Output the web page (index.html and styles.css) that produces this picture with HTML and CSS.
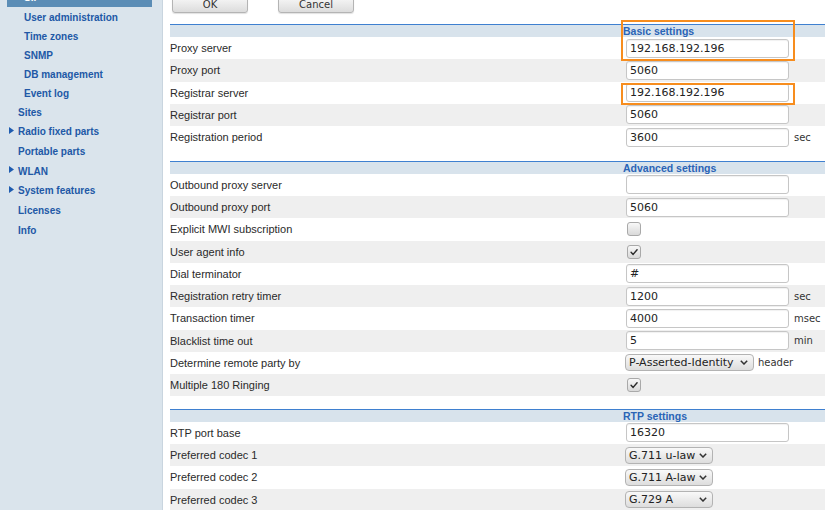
FILE: index.html
```html
<!DOCTYPE html>
<html>
<head>
<meta charset="utf-8">
<title>SIP settings</title>
<link rel="stylesheet" href="styles.css">
</head>
<body>
<div class="page">
  <aside class="sidebar">
    <nav class="nav">
      <a class="item sub active">SIP</a>
      <a class="item sub">User administration</a>
      <a class="item sub">Time zones</a>
      <a class="item sub">SNMP</a>
      <a class="item sub">DB management</a>
      <a class="item sub">Event log</a>
      <a class="item top first-top">Sites</a>
      <a class="item top"><svg class="arrow" viewBox="0 0 5 7"><path d="M0 0 L5 3.5 L0 7 Z"/></svg>Radio fixed parts</a>
      <a class="item top">Portable parts</a>
      <a class="item top"><svg class="arrow" viewBox="0 0 5 7"><path d="M0 0 L5 3.5 L0 7 Z"/></svg>WLAN</a>
      <a class="item top"><svg class="arrow" viewBox="0 0 5 7"><path d="M0 0 L5 3.5 L0 7 Z"/></svg>System features</a>
      <a class="item top">Licenses</a>
      <a class="item top">Info</a>
    </nav>
  </aside>

  <main class="content">
    <div class="buttons">
      <button class="btn">OK</button>
      <button class="btn">Cancel</button>
    </div>

    <section class="section">
      <div class="section-head"><span class="head-title">Basic settings</span></div>
      <div class="row"><span class="label">Proxy server</span><span class="field"><input class="text" value="192.168.192.196"></span></div>
      <div class="row alt"><span class="label">Proxy port</span><span class="field"><input class="text" value="5060"></span></div>
      <div class="row"><span class="label">Registrar server</span><span class="field"><input class="text" value="192.168.192.196"></span></div>
      <div class="row alt"><span class="label">Registrar port</span><span class="field"><input class="text" value="5060"></span></div>
      <div class="row"><span class="label">Registration period</span><span class="field"><input class="text" value="3600"><span class="unit">sec</span></span></div>
      <div class="highlight hl-basic"></div>
      <div class="highlight hl-registrar"></div>
    </section>

    <section class="section">
      <div class="section-head"><span class="head-title">Advanced settings</span></div>
      <div class="row"><span class="label">Outbound proxy server</span><span class="field"><input class="text" value=""></span></div>
      <div class="row alt"><span class="label">Outbound proxy port</span><span class="field"><input class="text" value="5060"></span></div>
      <div class="row"><span class="label">Explicit MWI subscription</span><span class="field"><span class="checkbox"></span></span></div>
      <div class="row alt"><span class="label">User agent info</span><span class="field"><span class="checkbox"><svg class="check" viewBox="0 0 14 14"><path d="M3.6 7.4 L6 9.8 L10.6 4.4"/></svg></span></span></div>
      <div class="row"><span class="label">Dial terminator</span><span class="field"><input class="text" value="#"></span></div>
      <div class="row alt"><span class="label">Registration retry timer</span><span class="field"><input class="text" value="1200"><span class="unit">sec</span></span></div>
      <div class="row"><span class="label">Transaction timer</span><span class="field"><input class="text" value="4000"><span class="unit">msec</span></span></div>
      <div class="row alt"><span class="label">Blacklist time out</span><span class="field"><input class="text" value="5"><span class="unit">min</span></span></div>
      <div class="row"><span class="label">Determine remote party by</span><span class="field"><span class="select"><select class="sel"><option>P-Asserted-Identity</option></select><svg class="chev" viewBox="0 0 8 5"><path d="M0.8 0.8 L4 4 L7.2 0.8"/></svg></span><span class="unit unit-tight">header</span></span></div>
      <div class="row alt"><span class="label">Multiple 180 Ringing</span><span class="field"><span class="checkbox"><svg class="check" viewBox="0 0 14 14"><path d="M3.6 7.4 L6 9.8 L10.6 4.4"/></svg></span></span></div>
    </section>

    <section class="section">
      <div class="section-head"><span class="head-title">RTP settings</span></div>
      <div class="row"><span class="label">RTP port base</span><span class="field"><input class="text" value="16320"></span></div>
      <div class="row alt"><span class="label">Preferred codec 1</span><span class="field"><span class="select"><select class="sel codec"><option>G.711 u-law</option></select><svg class="chev" viewBox="0 0 8 5"><path d="M0.8 0.8 L4 4 L7.2 0.8"/></svg></span></span></div>
      <div class="row"><span class="label">Preferred codec 2</span><span class="field"><span class="select"><select class="sel codec"><option>G.711 A-law</option></select><svg class="chev" viewBox="0 0 8 5"><path d="M0.8 0.8 L4 4 L7.2 0.8"/></svg></span></span></div>
      <div class="row alt"><span class="label">Preferred codec 3</span><span class="field"><span class="select"><select class="sel codec"><option>G.729 A</option></select><svg class="chev" viewBox="0 0 8 5"><path d="M0.8 0.8 L4 4 L7.2 0.8"/></svg></span></span></div>
    </section>
  </main>
</div>
</body>
</html>
```

FILE: styles.css
```css
html, body {
  margin: 0;
  padding: 0;
  background: #ffffff;
  overflow: hidden;
}

.page {
  display: flex;
  height: 510px;
  overflow: hidden;
}

/* ---------- sidebar ---------- */
.sidebar {
  flex: none;
  width: 163px;
  box-sizing: border-box;
  background: #dae4ec;
  border-right: 1px solid #c9d5df;
}

.nav {
  display: flex;
  flex-direction: column;
}

.item {
  display: flex;
  align-items: center;
  height: 19px;
  font: bold 10px "Liberation Sans", Arial, sans-serif;
  color: #2158a6;
  text-decoration: none;
  white-space: nowrap;
}

.item.sub {
  padding-left: 24px;
}

.item.top {
  padding-left: 18px;
  height: 19.65px;
}

.item.first-top {
  height: 19px;
}

.item.active {
  margin: -12px 10px 1px 7px;
  padding-left: 17px;
  background: #5b8db6;
  color: #ffffff;
}

.arrow {
  width: 5px;
  height: 7px;
  margin-left: -9px;
  margin-right: 4px;
  margin-top: -3px;
  fill: #1f5cb0;
}

/* ---------- content ---------- */
.content {
  flex: 1;
  min-width: 0;
  padding-left: 7px;
}

.buttons {
  display: flex;
  gap: 30px;
  padding-left: 2px;
  margin-top: -3px;
  margin-bottom: 11px;
}

.btn {
  width: 76px;
  height: 16px;
  padding: 0;
  border: 1px solid #b4b4b4;
  border-radius: 3px;
  background: linear-gradient(#f6f6f6, #dcdcdc);
  box-shadow: 0 1px 1px rgba(0, 0, 0, 0.12);
  font: 10px "DejaVu Sans", sans-serif;
  line-height: 14px;
  color: #333;
}

.section {
  position: relative;
  margin-bottom: 12.5px;
}

.section-head {
  height: 12px;
  border-top: 1px solid #3f80d0;
  background: #d8e3ec;
  padding-left: 453px;
  display: flex;
  align-items: center;
}

.head-title {
  font: bold 10.5px "Liberation Sans", Arial, sans-serif;
  color: #2a64b6;
  line-height: 12px;
  white-space: nowrap;
}

.row {
  display: grid;
  grid-template-columns: 455px 1fr;
  align-items: center;
  height: 22.25px;
  background: #ffffff;
}

.row.alt {
  background: #efefef;
}

.label {
  font: 11px "Liberation Sans", Arial, sans-serif;
  color: #2a2a2a;
  white-space: nowrap;
}

.field {
  display: flex;
  align-items: center;
  white-space: nowrap;
}

.text {
  width: 163px;
  height: 19px;
  box-sizing: border-box;
  margin: 0 0 0 1px;
  padding: 0 3px;
  border: 1px solid #c6c6c6;
  border-radius: 3px;
  background: #ffffff;
  box-shadow: inset 0 1px 1px rgba(0, 0, 0, 0.06);
  font: 11px "DejaVu Sans", sans-serif;
  color: #222;
  outline: none;
}

.unit {
  margin-left: 5px;
  font: 10px "DejaVu Sans", sans-serif;
  color: #333;
}

.unit.unit-tight {
  margin-left: 4px;
}

.checkbox {
  display: inline-flex;
  width: 14px;
  height: 14px;
  margin-left: 2px;
  box-sizing: border-box;
  border: 1px solid #a9a9a9;
  border-radius: 3px;
  background: linear-gradient(#f8f8f8, #d9d9d9);
}

.check {
  width: 12px;
  height: 12px;
  fill: none;
  stroke: #2b2b2b;
  stroke-width: 1.7;
  stroke-linecap: round;
  stroke-linejoin: round;
}

.select {
  position: relative;
  display: inline-flex;
}

.sel {
  appearance: none;
  -webkit-appearance: none;
  height: 17px;
  margin: 0;
  padding: 0 19px 0 3px;
  border: 1px solid #b3b3b3;
  border-radius: 4px;
  background: linear-gradient(#f9f9f9, #dddddd);
  font: 11px "DejaVu Sans", sans-serif;
  color: #222;
  outline: none;
}

.sel.codec {
  width: 88px;
  padding-right: 10px;
}

.chev {
  position: absolute;
  right: 6px;
  top: 6px;
  width: 8px;
  height: 5px;
  fill: none;
  stroke: #333;
  stroke-width: 1.5;
  pointer-events: none;
}

.highlight {
  position: absolute;
  box-sizing: border-box;
  border: 2.5px solid #f78d1e;
  pointer-events: none;
}

.hl-basic {
  left: 451px;
  top: -4px;
  width: 174px;
  height: 41px;
}

.hl-registrar {
  left: 451px;
  top: 58.5px;
  width: 174px;
  height: 22px;
}
```
